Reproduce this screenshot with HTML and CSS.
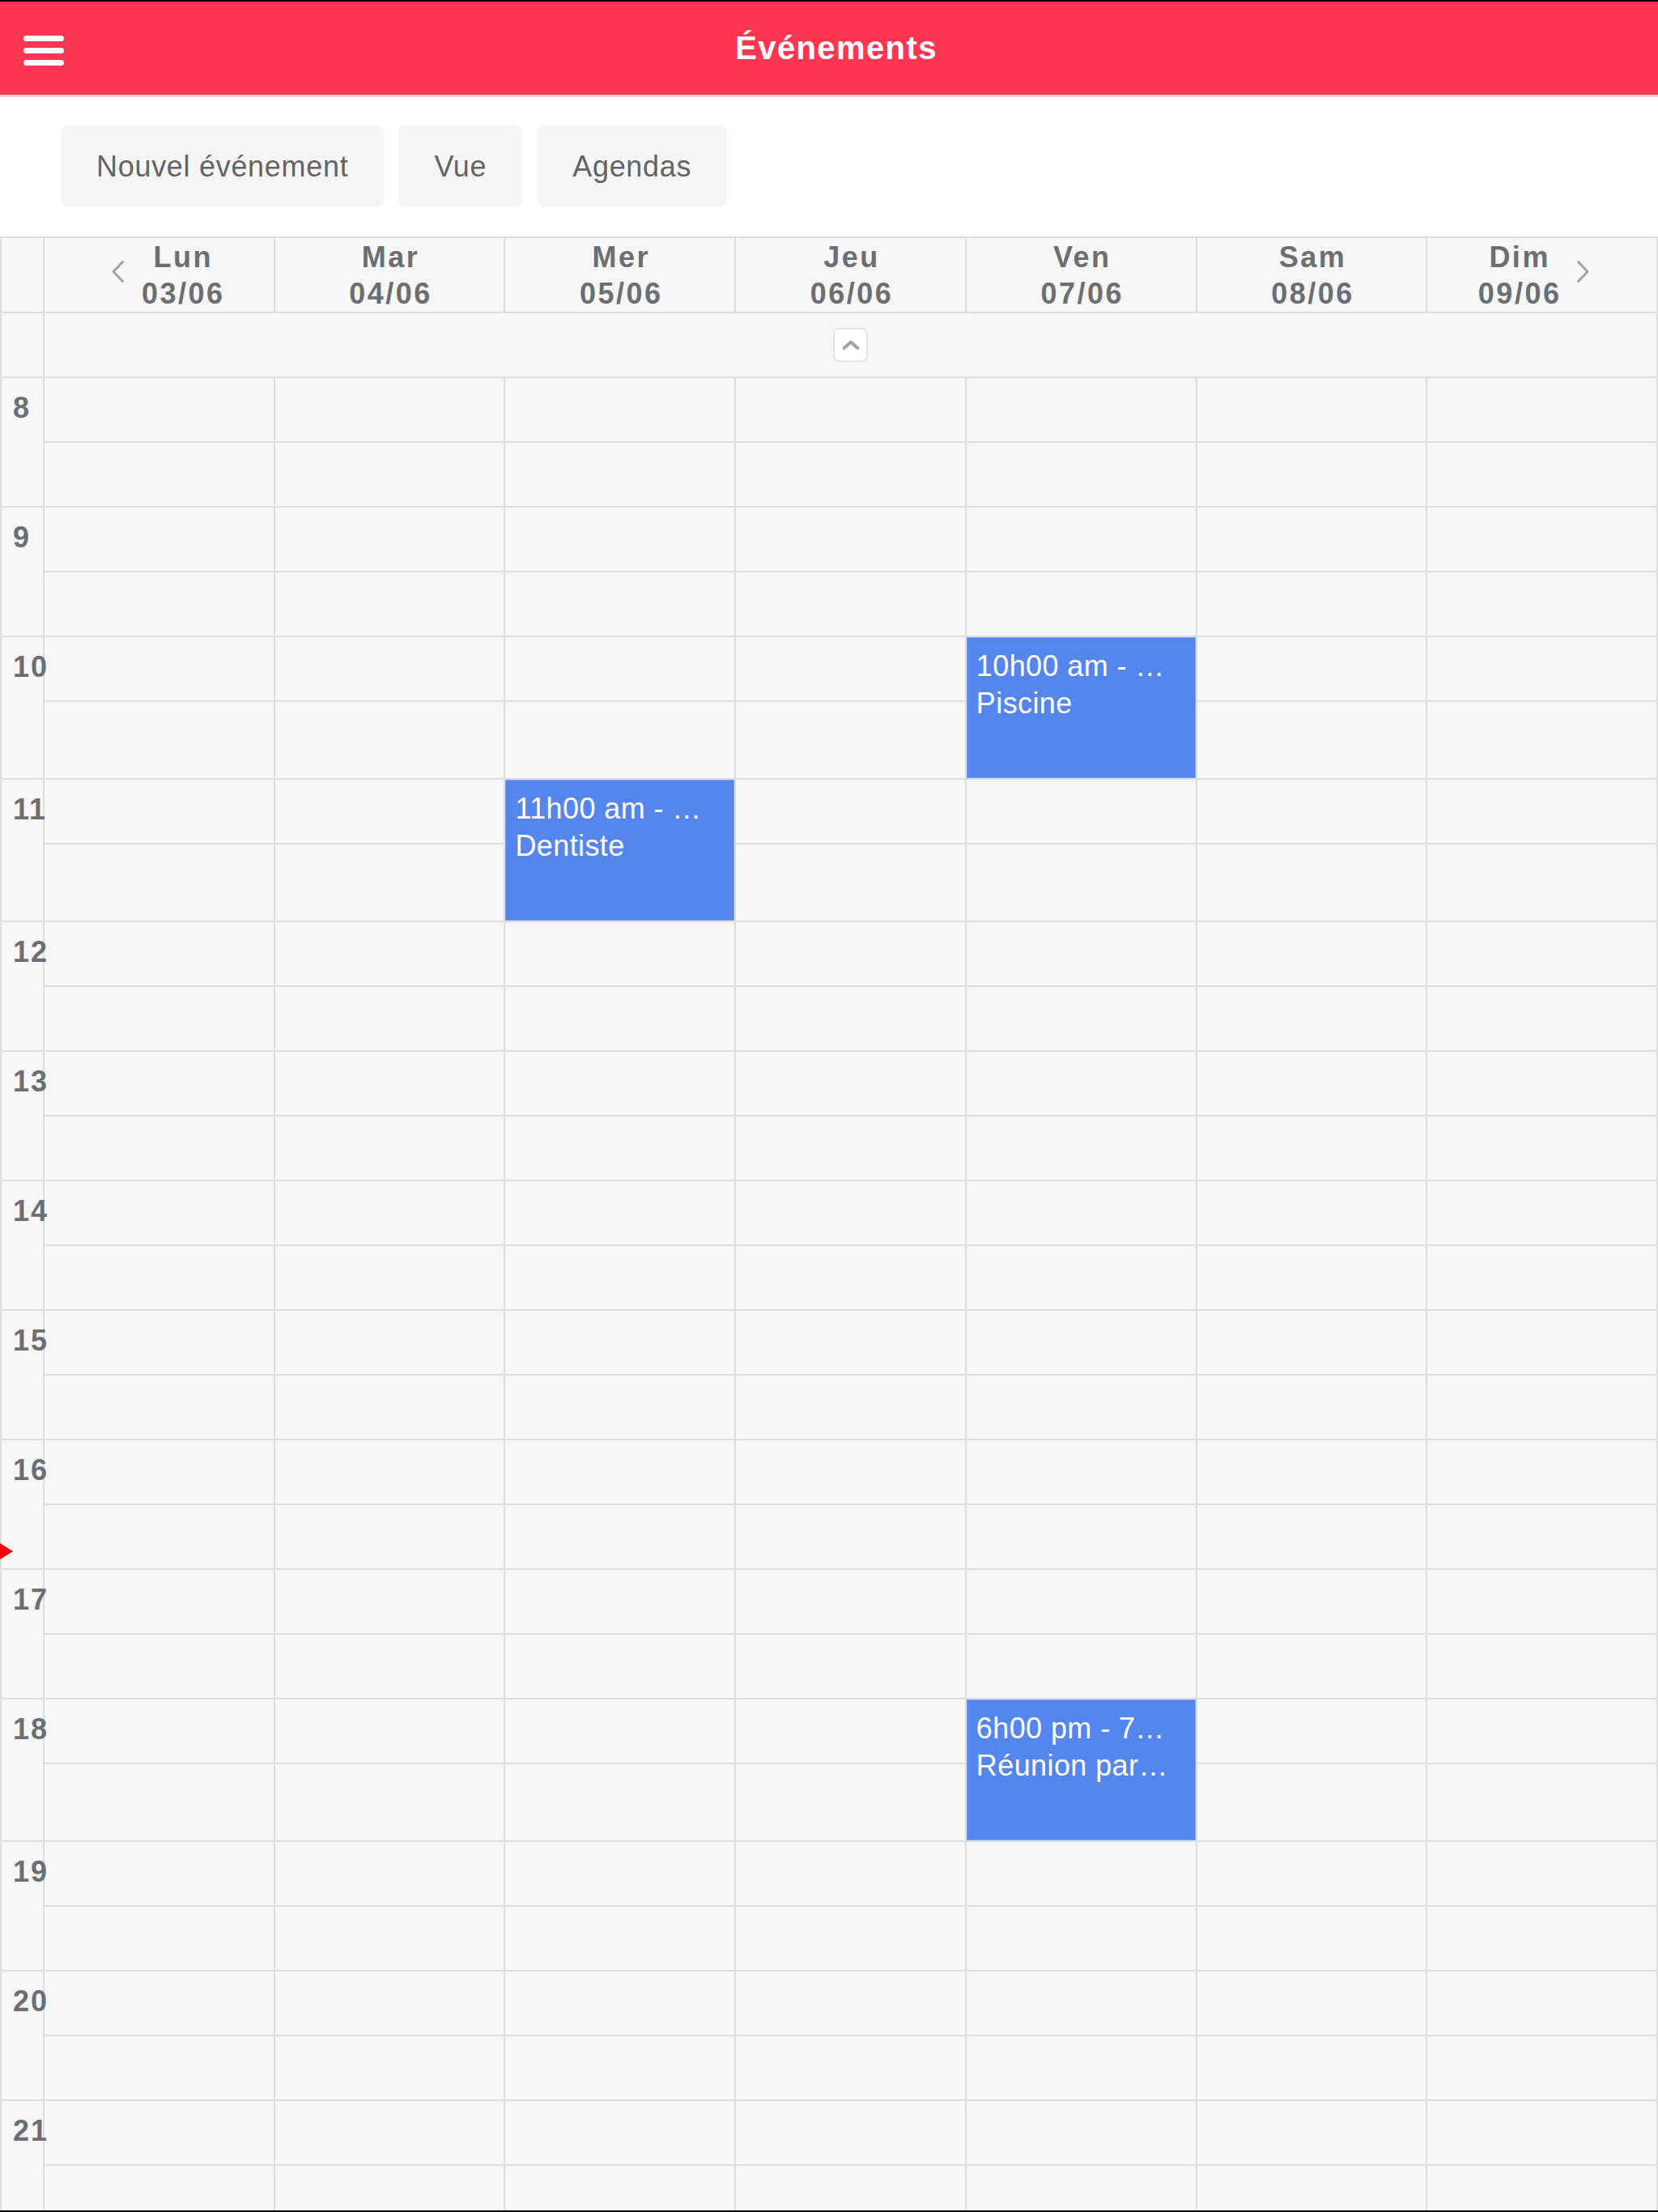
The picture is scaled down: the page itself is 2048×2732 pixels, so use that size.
FILE: index.html
```html
<!DOCTYPE html>
<html lang="fr">
<head>
<meta charset="utf-8">
<title>Événements</title>
<link rel="stylesheet" href="styles.css">
</head>
<body>
<div class="app">
  <header class="topbar">
    <button class="menu-btn" aria-label="Menu">
      <svg width="50" height="38" viewBox="0 0 50 38"><g stroke="#fff" stroke-width="7" stroke-linecap="round"><line x1="3.5" y1="3.5" x2="46.5" y2="3.5"/><line x1="3.5" y1="18.5" x2="46.5" y2="18.5"/><line x1="3.5" y1="33.5" x2="46.5" y2="33.5"/></g></svg>
    </button>
    <h1 class="title">Événements</h1>
    <div></div>
  </header>

  <div class="toolbar">
    <button class="btn">Nouvel événement</button>
    <button class="btn">Vue</button>
    <button class="btn">Agendas</button>
  </div>

  <div class="calendar">
    <div class="corner"></div>
    <div class="day-head first">
      <svg class="nav-arrow" width="17" height="29" viewBox="0 0 17 29"><polyline points="14.5,2.5 3,14.5 14.5,26.5" fill="none" stroke="#a2a2a2" stroke-width="3" stroke-linecap="round" stroke-linejoin="round"/></svg>
      <div class="day-label">Lun<br>03/06</div>
    </div>
    <div class="day-head"><div class="day-label">Mar<br>04/06</div></div>
    <div class="day-head"><div class="day-label">Mer<br>05/06</div></div>
    <div class="day-head"><div class="day-label">Jeu<br>06/06</div></div>
    <div class="day-head"><div class="day-label">Ven<br>07/06</div></div>
    <div class="day-head"><div class="day-label">Sam<br>08/06</div></div>
    <div class="day-head last">
      <div class="day-label">Dim<br>09/06</div>
      <svg class="nav-arrow" width="17" height="29" viewBox="0 0 17 29"><polyline points="2.5,2.5 14,14.5 2.5,26.5" fill="none" stroke="#a2a2a2" stroke-width="3" stroke-linecap="round" stroke-linejoin="round"/></svg>
    </div>

    <div class="corner"></div>
    <div class="allday">
      <button class="collapse-btn" aria-label="Réduire">
        <svg width="24" height="14" viewBox="0 0 24 14"><polyline points="3.5,11 12,3.5 20.5,11" fill="none" stroke="#a3a3a3" stroke-width="4" stroke-linecap="round" stroke-linejoin="round"/></svg>
      </button>
    </div>

    <div class="hour">8</div>
    <div class="slot"></div><div class="slot"></div><div class="slot"></div><div class="slot"></div><div class="slot"></div><div class="slot"></div><div class="slot"></div>
    <div class="slot"></div><div class="slot"></div><div class="slot"></div><div class="slot"></div><div class="slot"></div><div class="slot"></div><div class="slot"></div>

    <div class="hour">9</div>
    <div class="slot"></div><div class="slot"></div><div class="slot"></div><div class="slot"></div><div class="slot"></div><div class="slot"></div><div class="slot"></div>
    <div class="slot"></div><div class="slot"></div><div class="slot"></div><div class="slot"></div><div class="slot"></div><div class="slot"></div><div class="slot"></div>

    <div class="hour">10</div>
    <div class="slot"></div><div class="slot"></div><div class="slot"></div><div class="slot"></div>
    <div class="slot"><div class="event" title="10h00 am - 11h00 am · Piscine"><div class="event-line">10h00 am - …</div><div class="event-line">Piscine</div></div></div>
    <div class="slot"></div><div class="slot"></div>
    <div class="slot tall"></div><div class="slot tall"></div><div class="slot tall"></div><div class="slot tall"></div><div class="slot tall"></div><div class="slot tall"></div><div class="slot tall"></div>

    <div class="hour">11</div>
    <div class="slot"></div><div class="slot"></div>
    <div class="slot"><div class="event" title="11h00 am - 12h00 pm · Dentiste"><div class="event-line">11h00 am - …</div><div class="event-line">Dentiste</div></div></div>
    <div class="slot"></div><div class="slot"></div><div class="slot"></div><div class="slot"></div>
    <div class="slot tall"></div><div class="slot tall"></div><div class="slot tall"></div><div class="slot tall"></div><div class="slot tall"></div><div class="slot tall"></div><div class="slot tall"></div>

    <div class="hour">12</div>
    <div class="slot"></div><div class="slot"></div><div class="slot"></div><div class="slot"></div><div class="slot"></div><div class="slot"></div><div class="slot"></div>
    <div class="slot"></div><div class="slot"></div><div class="slot"></div><div class="slot"></div><div class="slot"></div><div class="slot"></div><div class="slot"></div>

    <div class="hour">13</div>
    <div class="slot"></div><div class="slot"></div><div class="slot"></div><div class="slot"></div><div class="slot"></div><div class="slot"></div><div class="slot"></div>
    <div class="slot"></div><div class="slot"></div><div class="slot"></div><div class="slot"></div><div class="slot"></div><div class="slot"></div><div class="slot"></div>

    <div class="hour">14</div>
    <div class="slot"></div><div class="slot"></div><div class="slot"></div><div class="slot"></div><div class="slot"></div><div class="slot"></div><div class="slot"></div>
    <div class="slot"></div><div class="slot"></div><div class="slot"></div><div class="slot"></div><div class="slot"></div><div class="slot"></div><div class="slot"></div>

    <div class="hour">15</div>
    <div class="slot"></div><div class="slot"></div><div class="slot"></div><div class="slot"></div><div class="slot"></div><div class="slot"></div><div class="slot"></div>
    <div class="slot"></div><div class="slot"></div><div class="slot"></div><div class="slot"></div><div class="slot"></div><div class="slot"></div><div class="slot"></div>

    <div class="hour">16<span class="now-marker"></span></div>
    <div class="slot"></div><div class="slot"></div><div class="slot"></div><div class="slot"></div><div class="slot"></div><div class="slot"></div><div class="slot"></div>
    <div class="slot"></div><div class="slot"></div><div class="slot"></div><div class="slot"></div><div class="slot"></div><div class="slot"></div><div class="slot"></div>

    <div class="hour">17</div>
    <div class="slot"></div><div class="slot"></div><div class="slot"></div><div class="slot"></div><div class="slot"></div><div class="slot"></div><div class="slot"></div>
    <div class="slot"></div><div class="slot"></div><div class="slot"></div><div class="slot"></div><div class="slot"></div><div class="slot"></div><div class="slot"></div>

    <div class="hour">18</div>
    <div class="slot"></div><div class="slot"></div><div class="slot"></div><div class="slot"></div>
    <div class="slot"><div class="event" title="6h00 pm - 7h00 pm · Réunion"><div class="event-line">6h00 pm - 7…</div><div class="event-line">Réunion par…</div></div></div>
    <div class="slot"></div><div class="slot"></div>
    <div class="slot tall"></div><div class="slot tall"></div><div class="slot tall"></div><div class="slot tall"></div><div class="slot tall"></div><div class="slot tall"></div><div class="slot tall"></div>

    <div class="hour">19</div>
    <div class="slot"></div><div class="slot"></div><div class="slot"></div><div class="slot"></div><div class="slot"></div><div class="slot"></div><div class="slot"></div>
    <div class="slot"></div><div class="slot"></div><div class="slot"></div><div class="slot"></div><div class="slot"></div><div class="slot"></div><div class="slot"></div>

    <div class="hour">20</div>
    <div class="slot"></div><div class="slot"></div><div class="slot"></div><div class="slot"></div><div class="slot"></div><div class="slot"></div><div class="slot"></div>
    <div class="slot"></div><div class="slot"></div><div class="slot"></div><div class="slot"></div><div class="slot"></div><div class="slot"></div><div class="slot"></div>

    <div class="hour">21</div>
    <div class="slot"></div><div class="slot"></div><div class="slot"></div><div class="slot"></div><div class="slot"></div><div class="slot"></div><div class="slot"></div>
    <div class="slot"></div><div class="slot"></div><div class="slot"></div><div class="slot"></div><div class="slot"></div><div class="slot"></div><div class="slot"></div>
  </div>
</div>
</body>
</html>
```

FILE: styles.css
```css
* {
  box-sizing: border-box;
}

html,
body {
  margin: 0;
  padding: 0;
}

body {
  font-family: "Liberation Sans", Arial, Helvetica, sans-serif;
  background: #ffffff;
}

.app {
  width: 2048px;
  height: 2732px;
  border-top: 2px solid #000;
  border-bottom: 2px solid #000;
  overflow: hidden;
  display: flex;
  flex-direction: column;
}

/* Top bar */
.topbar {
  flex: none;
  height: 118px;
  background: #ff3651;
  border-bottom: 3px solid #dadada;
  display: grid;
  grid-template-columns: 100px 1fr 84px;
  align-items: center;
}

.menu-btn {
  justify-self: start;
  margin: 7px 0 0 29px;
  padding: 0;
  width: 50px;
  height: 38px;
  border: none;
  background: transparent;
  display: block;
}

.menu-btn svg {
  display: block;
}

.title {
  margin: 0;
  text-align: center;
  color: #ffffff;
  font-weight: bold;
  font-size: 40px;
  letter-spacing: 1.4px;
  padding-left: 2px;
}

/* Toolbar */
.toolbar {
  flex: none;
  display: flex;
  gap: 18px;
  padding: 35px 0 36px 75px;
  background: #ffffff;
}

.btn {
  height: 101px;
  padding: 0 44px;
  border: none;
  border-radius: 8px;
  background: #f6f6f6;
  color: #646464;
  font-family: "Liberation Sans", Arial, Helvetica, sans-serif;
  font-size: 36px;
  letter-spacing: 0.7px;
}

/* Calendar */
.calendar {
  flex: none;
  display: grid;
  grid-template-columns: 51px repeat(7, minmax(0, 1fr));
  grid-template-rows: 91px 78px;
  grid-auto-rows: minmax(78px, auto);
  gap: 2px;
  padding: 2px;
  background: #dedede;
}

.corner {
  background: #f7f7f7;
}

.day-head {
  background: #f7f7f7;
  display: flex;
  align-items: center;
  justify-content: center;
  color: #6b6f73;
  font-weight: bold;
  font-size: 36px;
  line-height: 45px;
  letter-spacing: 2.5px;
  text-align: center;
}

.day-label {
  padding-left: 3px;
}

.day-head.first {
  padding-left: 22px;
}

.day-head.last {
  padding-right: 22px;
}

.nav-arrow {
  flex: none;
  display: block;
  margin-top: -8px;
}

.first .nav-arrow {
  margin-right: 18px;
}

.last .nav-arrow {
  margin-left: 19px;
}

.allday {
  grid-column: 2 / -1;
  background: #f7f7f7;
  display: flex;
  align-items: center;
  justify-content: center;
}

.collapse-btn {
  width: 43px;
  height: 42px;
  padding: 0;
  background: #ffffff;
  border: 2px solid #e6e6e6;
  border-radius: 7px;
  display: flex;
  align-items: center;
  justify-content: center;
}

.collapse-btn svg {
  display: block;
}

.hour {
  grid-row: span 2;
  position: relative;
  z-index: 1;
  background: #f7f7f7;
  padding: 16px 0 0 14px;
  color: #6b6f73;
  font-weight: bold;
  font-size: 36px;
  line-height: 41px;
  letter-spacing: 2px;
  white-space: nowrap;
}

.now-marker {
  position: absolute;
  left: -2px;
  top: 127px;
  width: 0;
  height: 0;
  border-top: 10px solid transparent;
  border-bottom: 10px solid transparent;
  border-left: 16px solid #ff0000;
}

.slot {
  position: relative;
  background: #f7f7f7;
}

.slot.tall {
  min-height: 94px;
}

.event {
  position: absolute;
  top: 0;
  left: 0;
  right: 0;
  height: 174px;
  z-index: 2;
  background: #5586ee;
  border: 1px solid #7ba1f2;
  color: #ffffff;
  font-size: 36px;
  line-height: 46px;
  letter-spacing: 0.4px;
  padding: 12px 12px 0 11px;
}

.event-line {
  white-space: nowrap;
  overflow: hidden;
  text-overflow: ellipsis;
}
```
